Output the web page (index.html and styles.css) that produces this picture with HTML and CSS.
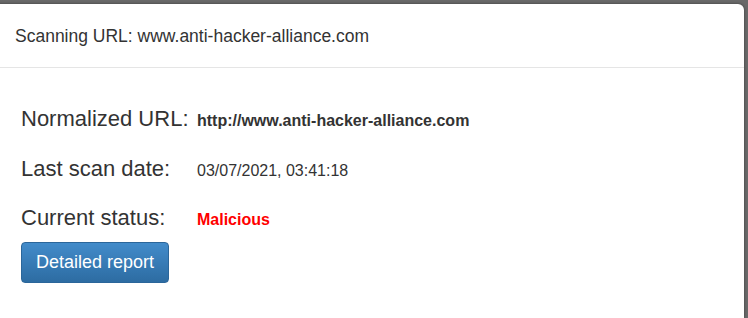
FILE: index.html
```html
<!DOCTYPE html>
<html lang="en">
<head>
    <meta charset="UTF-8">
    <meta name="viewport" content="width=device-width, initial-scale=1.0">
    <title>Scan result</title>
    <link rel="stylesheet" href="styles.css">
</head>
<body>
    <!-- fenetre modale du resultat de scan -->
    <div class="modal">
        <div class="modal-header">
            <h4 class="modal-title">Scanning URL: www.anti-hacker-alliance.com</h4>
        </div>
        <div class="modal-body">
            <div class="row">
                <span class="label">Normalized URL:</span>
                <b class="value">http://www.anti-hacker-alliance.com</b>
            </div>
            <div class="row">
                <span class="label">Last scan date:</span>
                <span class="value">03/07/2021, 03:41:18</span>
            </div>
            <div class="row">
                <span class="label">Current status:</span>
                <b class="value malicious">Malicious</b>
            </div>
            <button class="btn btn-primary">Detailed report</button>
        </div>
    </div>
</body>
</html>
```

FILE: styles.css
```css
body {
    margin: 0;
    background-color: #696969;
    font-family: "Liberation Sans", Arial, Helvetica, sans-serif;
    color: #333;
    overflow: hidden;
}
/* la modale deborde a gauche et en bas */
.modal {
    margin: 4px 4px 0 -10px;
    min-height: calc(100vh - 4px);
    background-color: #fff;
    border-radius: 6px 6px 0 0;
    box-shadow: 0 0 3px rgba(0, 0, 0, 0.45);
}
.modal-header {
    padding: 19px 15px 18px 25px;
    border-bottom: 1px solid #e5e5e5;
}
.modal-title {
    margin: 0;
    font-size: 17.5px;
    font-weight: normal;
    line-height: 26px;
}
.modal-body {
    padding: 36px 31px 0;
}
.row {
    display: grid;
    grid-template-columns: 176px auto;
    align-items: baseline;
    height: 30px;
    line-height: 30px;
    margin-bottom: 19.5px;
}
.row:nth-child(3) {
    margin-bottom: 9px;
}
.label {
    font-size: 22px;
}
.value {
    font-size: 16px;
}
.malicious {
    color: #f00;
}
.btn {
    display: inline-block;
    padding: 8px 14px;
    font-family: inherit;
    font-size: 18px;
    line-height: 23px;
    border: 1px solid;
    border-radius: 4px;
    cursor: pointer;
}
.btn-primary {
    color: #fff;
    background-image: linear-gradient(to bottom, #428bca 0, #2d6ca2 100%);
    border-color: #2b669a;
}
```
